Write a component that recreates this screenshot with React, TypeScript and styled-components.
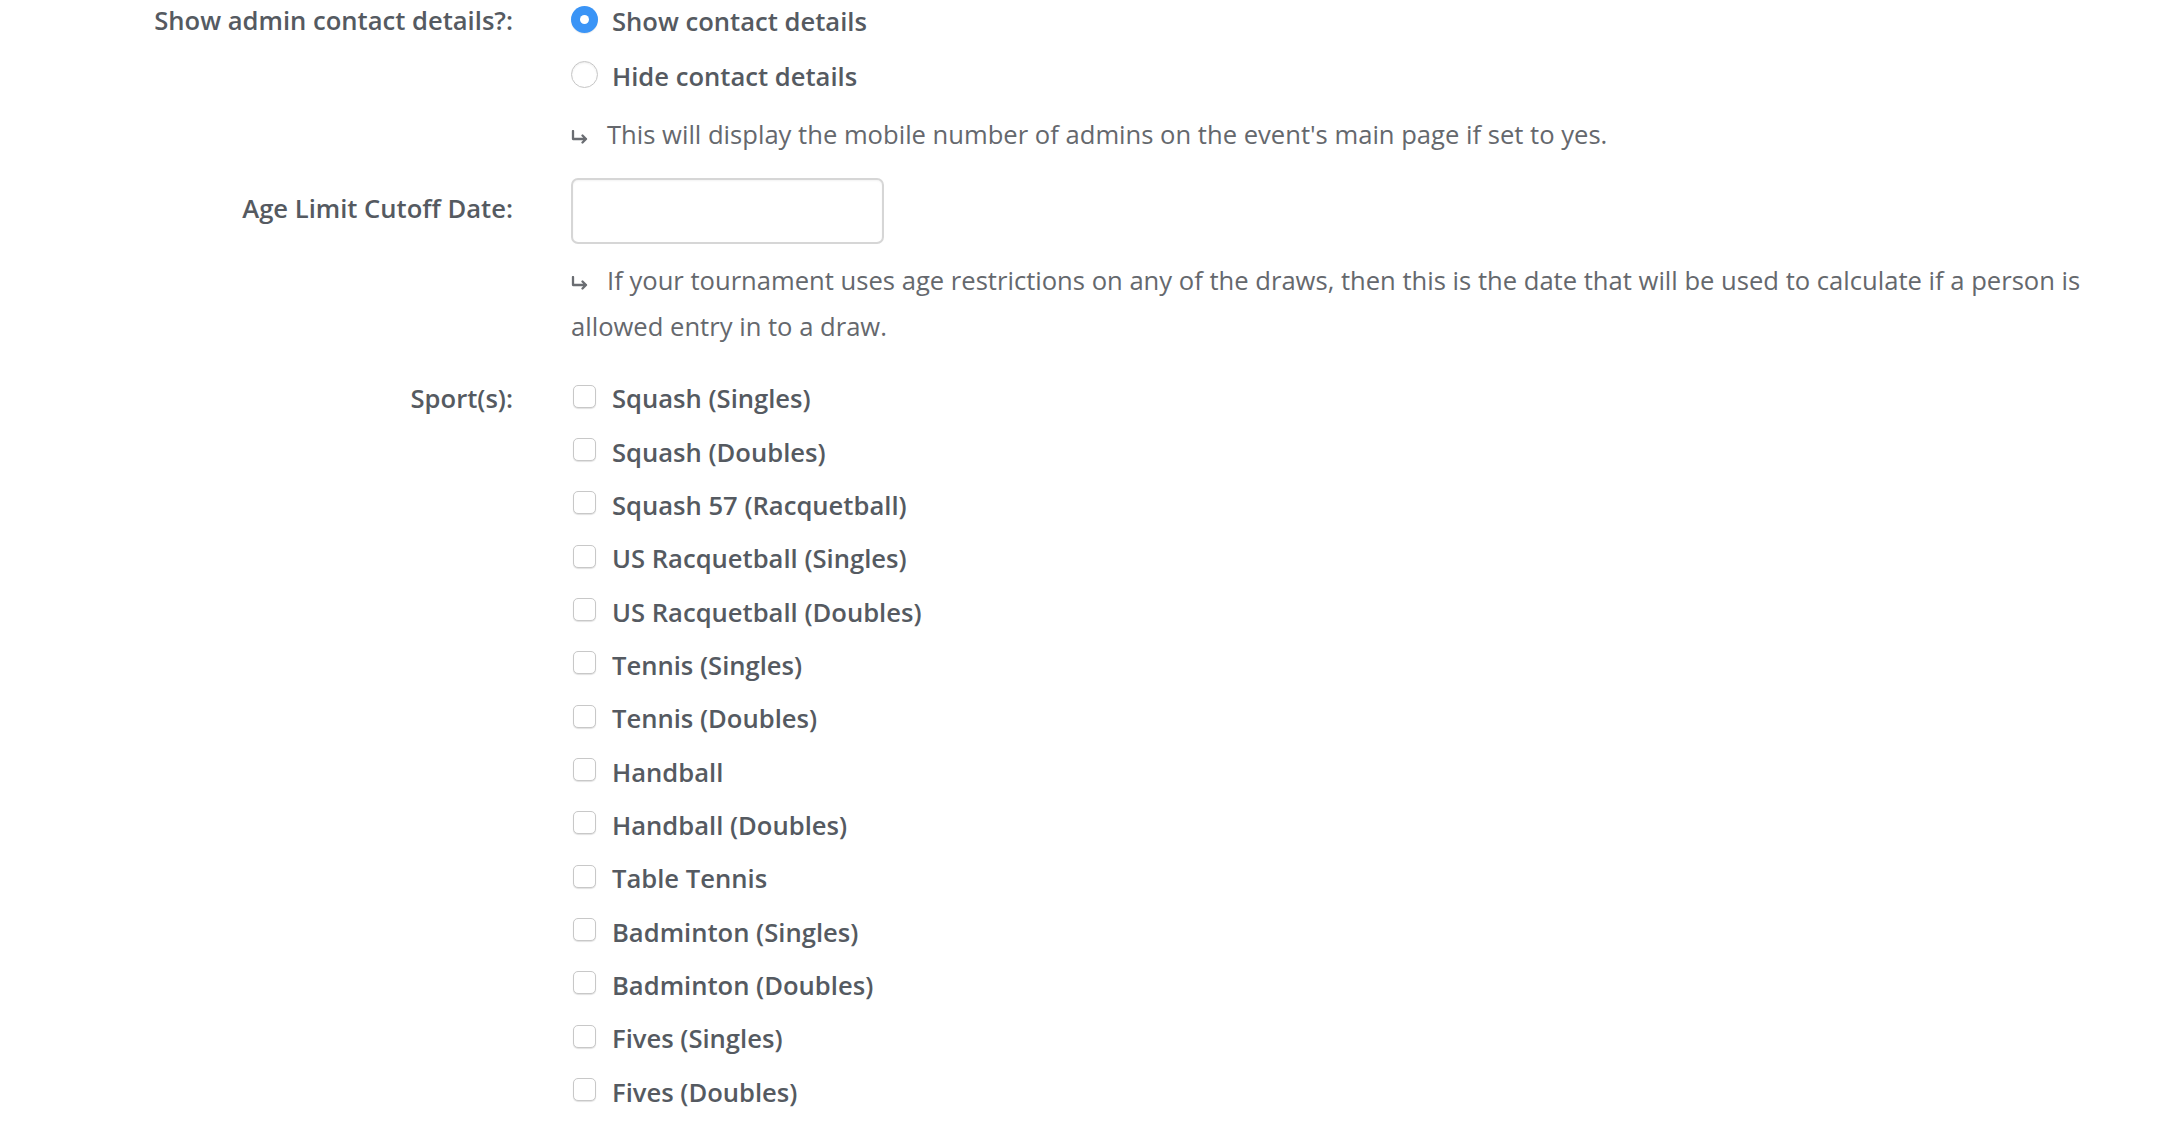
import React from "react";
import styled, { createGlobalStyle } from "styled-components";

const GlobalStyle = createGlobalStyle`
    html, body {
        margin: 0;
        padding: 0;
        background: #ffffff;
    }
    body {
        font-family: "Open Sans", "Noto Sans", "Liberation Sans", sans-serif;
        font-size: 25.6px;
        color: #555a61;
    }
`;

const sports = [
    "Squash (Singles)",
    "Squash (Doubles)",
    "Squash 57 (Racquetball)",
    "US Racquetball (Singles)",
    "US Racquetball (Doubles)",
    "Tennis (Singles)",
    "Tennis (Doubles)",
    "Handball",
    "Handball (Doubles)",
    "Table Tennis",
    "Badminton (Singles)",
    "Badminton (Doubles)",
    "Fives (Singles)",
    "Fives (Doubles)",
];

const Form = styled.form`
    display: flex;
    flex-direction: column;
    padding-right: 40px;
`;

const FormGroup = styled.div<{ $top?: number }>`
    display: grid;
    grid-template-columns: 513px 1fr;
    column-gap: 58px;
    margin-top: ${(p) => p.$top ?? 0}px;
`;

const Label = styled.label<{ $lh: number }>`
    text-align: right;
    font-weight: 600;
    color: #555a61;
    line-height: ${(p) => p.$lh}px;
    white-space: nowrap;
`;

const Controls = styled.div`
    display: flex;
    flex-direction: column;
    min-width: 0;
`;

const OptionList = styled.div<{ $gap: number }>`
    display: flex;
    flex-direction: column;
    gap: ${(p) => p.$gap}px;
`;

const Option = styled.label<{ $h: number }>`
    display: flex;
    align-items: center;
    height: ${(p) => p.$h}px;
    font-weight: 600;
    color: #555a61;
    cursor: pointer;
    white-space: nowrap;
`;

const Radio = styled.span<{ $checked?: boolean }>`
    box-sizing: border-box;
    width: 27px;
    height: 27px;
    border-radius: 50%;
    flex-shrink: 0;
    margin-right: 14px;
    margin-top: -3px;
    display: flex;
    align-items: center;
    justify-content: center;
    background: ${(p) => (p.$checked ? "#3a94f6" : "#ffffff")};
    border: ${(p) => (p.$checked ? "none" : "1.5px solid #c6c6c6")};
    box-shadow: ${(p) =>
        p.$checked
            ? "0 1px 1px rgba(0,0,0,0.08)"
            : "inset 0 1px 2px rgba(0,0,0,0.08)"};

    &::after {
        content: "";
        display: ${(p) => (p.$checked ? "block" : "none")};
        width: 9px;
        height: 9px;
        border-radius: 50%;
        background: #ffffff;
    }
`;

const Checkbox = styled.span`
    box-sizing: border-box;
    width: 23px;
    height: 23px;
    margin-left: 2px;
    margin-right: 16px;
    margin-top: -5px;
    flex-shrink: 0;
    border-radius: 5px;
    border: 1.5px solid #c8c8c8;
    background: #ffffff;
    box-shadow: 0 1px 1px rgba(0, 0, 0, 0.12);
`;

const Help = styled.p<{ $top: number }>`
    margin: ${(p) => p.$top}px 0 0;
    font-weight: 400;
    color: #65686d;
    line-height: 46px;
`;

const Arrow = styled.svg`
    display: inline-block;
    width: 18px;
    height: 14px;
    margin-right: 18px;
    vertical-align: 0px;
`;

const DateInput = styled.input`
    box-sizing: border-box;
    width: 313px;
    height: 66px;
    border: 2px solid #d6d6d6;
    border-radius: 7px;
    background: #ffffff;
    box-shadow: inset 0 1px 2px rgba(0, 0, 0, 0.05);
    font: inherit;
    padding: 0 16px;
    outline: none;
`;

const HelpArrow = () => (
    <Arrow viewBox="0 0 18 14" aria-hidden>
        <path
            d="M2 1 V9 H15 M11.5 5.5 L15 9 L11.5 12.5"
            fill="none"
            stroke="#6a6d72"
            strokeWidth="2.3"
            strokeLinecap="round"
            strokeLinejoin="round"
        />
    </Arrow>
);

export default function App() {
    return (
        <>
            <GlobalStyle />
            <Form>
                <FormGroup>
                    <Label $lh={42}>Show admin contact details?:</Label>
                    <Controls>
                        <OptionList $gap={13}>
                            <Option $h={42}>
                                <Radio $checked />
                                Show contact details
                            </Option>
                            <Option $h={42}>
                                <Radio />
                                Hide contact details
                            </Option>
                        </OptionList>
                        <Help $top={15}>
                            <HelpArrow />
                            This will display the mobile number of admins on the event's main page if set to yes.
                        </Help>
                    </Controls>
                </FormGroup>

                <FormGroup $top={20}>
                    <Label $lh={62}>Age Limit Cutoff Date:</Label>
                    <Controls>
                        <DateInput type="text" />
                        <Help $top={14}>
                            <HelpArrow />
                            If your tournament uses age restrictions on any of the draws, then this is the date that will be used to calculate if a person is allowed entry in to a draw.
                        </Help>
                    </Controls>
                </FormGroup>

                <FormGroup $top={22}>
                    <Label $lh={53.35}>Sport(s):</Label>
                    <Controls>
                        <OptionList $gap={0}>
                            {sports.map((s) => (
                                <Option key={s} $h={53.35}>
                                    <Checkbox />
                                    {s}
                                </Option>
                            ))}
                        </OptionList>
                    </Controls>
                </FormGroup>
            </Form>
        </>
    );
}
